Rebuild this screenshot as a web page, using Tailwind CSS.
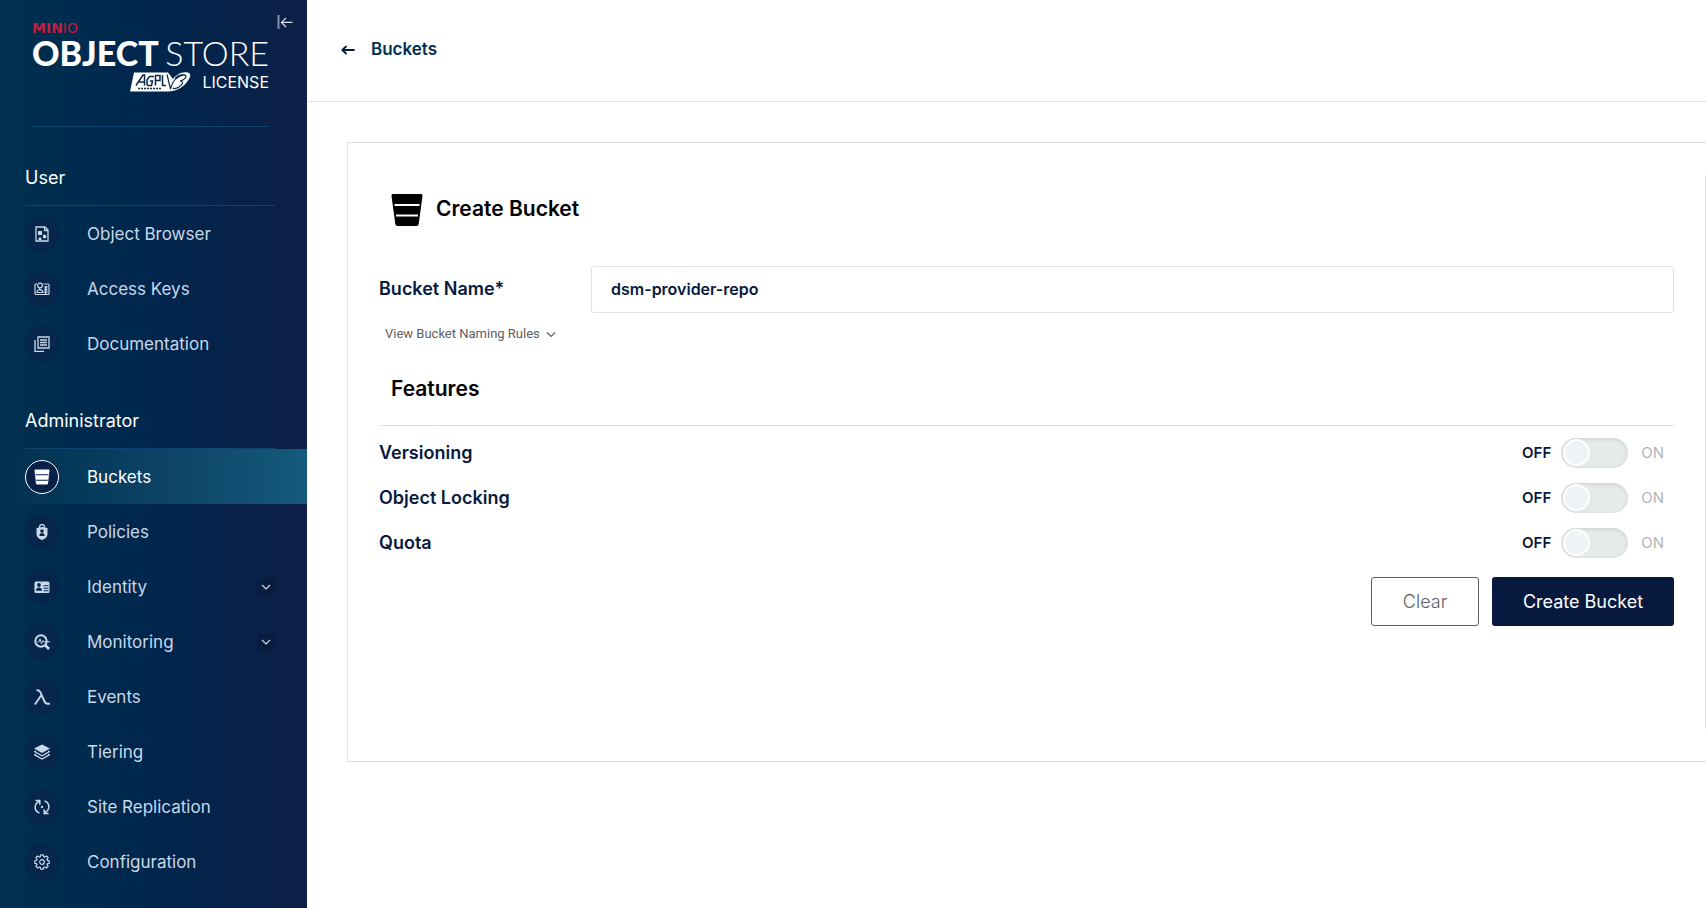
<!DOCTYPE html>
<html lang="en">
<head>
<meta charset="utf-8">
<meta name="viewport" content="width=device-width, initial-scale=1">
<title>MinIO Console - Create Bucket</title>
<script src="https://cdn.jsdelivr.net/npm/@tailwindcss/browser@4"></script>
</head>
<body class="flex min-h-screen overflow-x-hidden bg-white font-['Inter',sans-serif] text-[#07193e]">
<nav aria-label="Main" class="relative flex w-[307px] shrink-0 flex-col bg-linear-to-r from-[#00304f] via-[#00264d] to-[#0c1f46] text-[17px] leading-6 text-[#c9d8ea]">
  <button type="button" aria-label="Collapse menu" class="absolute top-[14px] right-[14px] flex size-4 items-center justify-center">
    <svg class="size-4" viewBox="0 0 16 16" fill="none" stroke="#dbe3ec" stroke-width="1.2"><path d="M1.5 1v14" stroke="#7f93ab" stroke-width="2"/><path d="M15.5 8.400H5M9 4 4.500 8.400 9 13"/></svg>
  </button>
  <div class="mr-[38px] ml-8 flex h-[127px] flex-col border-b border-[#0f4470] pt-[22px]">
    <div class="flex h-3 items-center font-['DejaVu_Sans',sans-serif] text-sm leading-3 text-[#c51c3f]"><span class="font-bold">MIN</span><span>IO</span></div>
    <div class="flex h-[38px] items-center justify-between font-['Lato',sans-serif] text-[34px] leading-[38px] text-white"><span class="font-black">OBJECT</span><span class="font-light">STORE</span></div>
    <div class="flex h-5 items-center justify-end gap-[11px] text-base leading-5 text-white">
      <svg class="h-5 w-[61px]" viewBox="0 0 61 20" aria-label="AGPL v3 Free Software">
        <path d="M4 0.500H38L43 7C46 3 51 0 56 .3 62 .5 61 5 57 10 52 16 46 19.500 38 19.500H0Z" fill="#fff"/>
        <g fill="none" stroke="#05284c">
          <path d="M6 13.500 13 3h1.500v10.500M9 10h5M24 4.500h-4.500L17 8v4.500l1 1h3.500L22.500 9H20M25.500 13.500V3.500H30v5h-4.500M32.500 3v10.500H36" stroke-width="1.500"/>
          <path d="M37 2.500 40.500 17M40.500 17C42 10 47 4 55 2.500M45 6.500c4-4 9-4.500 10.500-3s-1 4.500-5.500 5.500c4 0 3 3.500-1 6-2 1.500-5 2-6 1" stroke-width="1.200"/>
          <path d="M8 16.500h24" stroke-width="1.500" stroke-dasharray="2 1"/>
        </g>
      </svg>
      <span>LICENSE</span>
    </div>
  </div>

  <h2 class="mr-8 ml-[25px] flex h-[79px] items-center border-b border-[#0f4470] pt-6 text-lg text-white">User</h2>
  <ul>
    <li><a href="#browser" class="flex h-[55px] items-center gap-7 pr-8 pl-[25px]"><span class="flex size-[34px] items-center justify-center rounded-full border border-[#072149] bg-[#06264c]"><svg class="size-4" viewBox="0 0 16 16" fill="none" stroke="currentColor" stroke-width="1.300"><path d="M2 1h9l3 3v11H2ZM10.500 1v3.500H14"/><path d="M4 5h4v4H4ZM4 14l2-3.500L8 14ZM12.500 10.500a1.900 1.900 0 1 1-3.800 0 1.900 1.900 0 0 1 3.800 0" fill="currentColor" stroke="none"/></svg></span>Object Browser</a></li>
    <li><a href="#keys" class="flex h-[55px] items-center gap-7 pr-8 pl-[25px]"><span class="flex size-[34px] items-center justify-center rounded-full border border-[#072149] bg-[#06264c]"><svg class="size-4" viewBox="0 0 16 16" fill="none" stroke="currentColor" stroke-width="1.200"><path d="M3 3H1.500Q1 3 1 4v8.500q0 1 1 1h12q1 0 1-1V4q0-1-1-1H9.500"/><circle cx="6" cy="4.500" r="2.400"/><path d="M3 11.500c0-4 6-4 6 0ZM5 7.500l2 2"/><path d="M11.500 5v8M10.500 6h3M10.500 8.500h3M10.500 11h3" stroke-width="1.500"/></svg></span>Access Keys</a></li>
    <li><a href="#docs" class="flex h-[55px] items-center gap-7 pr-8 pl-[25px]"><span class="flex size-[34px] items-center justify-center rounded-full border border-[#072149] bg-[#06264c]"><svg class="size-4" viewBox="0 0 16 16" fill="none" stroke="currentColor" stroke-width="1.300"><path d="M4 1h11v11H4ZM1 4v11.300h9M6 4h7M6 6.500h7M6 9h7"/></svg></span>Documentation</a></li>
  </ul>

  <h2 class="mr-8 ml-[25px] flex h-[78px] items-center border-b border-[#0f4470] pt-[22px] text-lg text-white">Administrator</h2>
  <ul>
    <li><a href="#buckets" aria-current="page" class="flex h-[55px] items-center gap-7 bg-linear-to-r from-[#01304f] via-[#0c4265] to-[#155a7c] pr-8 pl-[25px] text-white"><span class="flex size-[34px] items-center justify-center rounded-full border border-white bg-[#072149]"><svg class="size-4" viewBox="0 0 16 16"><path d="M.5 1.500Q.5.500 1.500.5h13q1 0 1 1L14 14.500q-.2 1-1 1H3q-.8 0-1-1Z" fill="#fff"/><path d="M1.500 5.800h13M2.200 11.200h11.600" stroke="#072149" stroke-width="1.100"/></svg></span>Buckets</a></li>
    <li><a href="#policies" class="flex h-[55px] items-center gap-7 pr-8 pl-[25px]"><span class="flex size-[34px] items-center justify-center rounded-full border border-[#072149] bg-[#06264c]"><svg class="size-4" viewBox="0 0 16 16"><path d="M5.500 4V3a2.500 2.500 0 0 1 5 0v1" fill="none" stroke="currentColor" stroke-width="1.300"/><path d="M2.500 4 8 3l5.500 1v6q0 4-5.500 6-5.500-2-5.500-6Z" fill="currentColor"/><circle cx="8" cy="7" r="1.800" fill="#06264c"/><path d="M5.300 12c0-4 5.400-4 5.400 0Z" fill="#06264c"/></svg></span>Policies</a></li>
    <li><button type="button" aria-expanded="false" class="flex h-[55px] w-full items-center gap-7 pr-8 pl-[25px] text-left"><span class="flex size-[34px] items-center justify-center rounded-full border border-[#072149] bg-[#06264c]"><svg class="size-4" viewBox="0 0 16 16"><rect x=".5" y="2.500" width="15" height="11.500" rx="1.500" fill="currentColor"/><g fill="#06264c"><circle cx="5" cy="6" r="1.900"/><path d="M2 11.800c0-4.300 6-4.300 6 0Z"/><path d="M9.500 6.200h5v1h-5ZM9.500 8.700h5v1h-5ZM9.500 11.200h5v1h-5Z"/></g></svg></span><span class="flex-1">Identity</span><span class="flex size-[18px] items-center justify-center rounded-xs bg-[#081c3f]"><svg class="size-2.5" viewBox="0 0 10 10" fill="none" stroke="currentColor" stroke-width="1.200"><path d="m1 3 4 4 4-4"/></svg></span></button></li>
    <li><button type="button" aria-expanded="false" class="flex h-[55px] w-full items-center gap-7 pr-8 pl-[25px] text-left"><span class="flex size-[34px] items-center justify-center rounded-full border border-[#072149] bg-[#06264c]"><svg class="size-4" viewBox="0 0 16 16" fill="none" stroke="currentColor"><circle cx="7" cy="7" r="5.700" stroke-width="2"/><path d="m11 11 4 4" stroke-width="2.600"/><path d="M3.500 7.800H5l1-3 1.500 5L9 6.500l.8 1.300H16" stroke-width="1"/></svg></span><span class="flex-1">Monitoring</span><span class="flex size-[18px] items-center justify-center rounded-xs bg-[#081c3f]"><svg class="size-2.5" viewBox="0 0 10 10" fill="none" stroke="currentColor" stroke-width="1.200"><path d="m1 3 4 4 4-4"/></svg></span></button></li>
    <li><a href="#events" class="flex h-[55px] items-center gap-7 pr-8 pl-[25px]"><span class="flex size-[34px] items-center justify-center rounded-full border border-[#072149] bg-[#06264c]"><svg class="size-4" viewBox="0 0 16 16" fill="none" stroke="currentColor" stroke-width="1.900"><path d="M2.500 1.300h1.300Q5.600 1.300 6.500 3.500L10.500 12.500q1 2.300 3 2.200H16M7.500 6 .9 15.500"/></svg></span>Events</a></li>
    <li><a href="#tiering" class="flex h-[55px] items-center gap-7 pr-8 pl-[25px]"><span class="flex size-[34px] items-center justify-center rounded-full border border-[#072149] bg-[#06264c]"><svg class="size-4" viewBox="0 0 16 16" fill="none" stroke="currentColor" stroke-width="1.300"><path d="m8 .500 8 4-8 4.500-8-4.500Z" fill="currentColor" stroke="none"/><path d="M1.800 7 .8 7.800 8 11.700l7.200-3.900-1-.8M1.800 10l-1 .9L8 15l7.200-4.100-1-.9"/></svg></span>Tiering</a></li>
    <li><a href="#replication" class="flex h-[55px] items-center gap-7 pr-8 pl-[25px]"><span class="flex size-[34px] items-center justify-center rounded-full border border-[#072149] bg-[#06264c]"><svg class="size-4" viewBox="0 0 16 16" fill="none" stroke="currentColor" stroke-width="1.500"><path d="M5.500 14C0 12-.5 5.500 5 2.500M1.500 1.500h4.300v4.300M10.500 2C16 4 16.500 10.500 11 13.500M14.500 14.500h-4.300v-4.300"/><circle cx="8" cy="8" r="1.200" fill="currentColor" stroke="none"/></svg></span>Site Replication</a></li>
    <li><a href="#configuration" class="flex h-[55px] items-center gap-7 pr-8 pl-[25px]"><span class="flex size-[34px] items-center justify-center rounded-full border border-[#072149] bg-[#06264c]"><svg class="size-4" viewBox="0 0 16 16" fill="none" stroke="currentColor" stroke-width="1.200" stroke-linejoin="round"><path d="M6.700.8h2.600l.4 1.900 1 .4 1.700-1.100 1.700 1.700-1.100 1.700.4 1 1.800.4v2.500l-1.800.4-.4 1 1.100 1.700-1.700 1.700-1.700-1.100-1 .4-.4 1.800H6.700l-.4-1.800-1-.4-1.700 1.100-1.700-1.700L3 10.700l-.4-1-1.800-.4V6.800l1.800-.4.400-1-1.100-1.700L3.600 2l1.700 1.100 1-.4Z"/><circle cx="8" cy="8" r="2.300"/></svg></span>Configuration</a></li>
  </ul>
</nav>

<main class="min-w-0 flex-1">
  <header class="flex h-[102px] items-center border-b border-[#e2e2e2] pb-1 pl-[34px]">
    <a href="#buckets" class="flex items-center gap-4 text-[17px] leading-6 font-semibold text-[#002f55]">
      <svg class="mt-0.5 h-3 w-3.5" viewBox="0 0 14 12" fill="none" stroke="#07193e" stroke-width="1.800" stroke-linecap="round" stroke-linejoin="round"><path d="M13 6H1.500M5 2.500 1.300 6 5 9.500"/></svg>Buckets
    </a>
  </header>

  <section class="mt-10 ml-10 flex gap-[31px] rounded-l-xs border border-r-0 border-[#e2e2e2] py-8 pl-[31px]">
    <form class="min-w-0 flex-1">
      <h1 class="mt-[19px] flex h-8 items-center gap-[13px] pl-3 text-[21px] leading-7 font-semibold text-black">
        <svg class="size-8" viewBox="0 0 32 32"><path d="M.5 2Q.3 0 2 0h28q1.700 0 1.500 2L27.700 30q-.3 2-2 2H6.300q-1.700 0-2-2Z"/><path d="M3.500 11h25M5 21.500h22" stroke="#fff" stroke-width="2.200"/></svg><span class="pb-0.5">Create Bucket</span>
      </h1>
      <div class="mt-10 flex items-center">
        <label for="bucket-name" class="w-[212px] shrink-0 pb-0.5 text-lg leading-6 font-semibold">Bucket Name*</label>
        <input id="bucket-name" type="text" value="dsm-provider-repo" class="h-[47px] min-w-0 flex-1 rounded-[3px] border border-[#e2e2e2] px-[19px] pb-0.5 text-base font-semibold outline-none">
      </div>
      <button type="button" aria-expanded="false" class="mt-[11px] flex h-5 items-center gap-1.5 pl-1.5 font-['Roboto',sans-serif] text-[13px] leading-5 text-[#5e5e5e]">View Bucket Naming Rules
        <svg class="size-2.5" viewBox="0 0 10 10" fill="none" stroke="currentColor" stroke-width="1.200"><path d="m1 3.500 4 4 4-4"/></svg>
      </button>
      <h2 class="mt-[31px] border-b border-[#e2e2e2] pb-[22px] pl-3 text-[21px] leading-7 font-semibold text-black">Features</h2>
      <div class="mt-1 text-lg leading-6 font-semibold">
        <div class="flex h-[45px] items-center justify-between"><label for="versioning">Versioning</label>
          <div class="flex items-center pr-2.5 text-[15px]"><span class="mr-2.5">OFF</span><input id="versioning" type="checkbox" role="switch" class="flex h-[30px] w-[67px] appearance-none items-center rounded-full bg-[#e6eaeb] px-0.5 shadow-[inset_0_1px_4px_#00000020] before:size-[27px] before:rounded-full before:border-2 before:border-white before:bg-[#f0f3f5] before:content-[''] checked:justify-end checked:bg-green-500"><span class="ml-[13px] font-normal text-[#b4b4b4]">ON</span></div></div>
        <div class="flex h-[45px] items-center justify-between"><label for="locking">Object Locking</label>
          <div class="flex items-center pr-2.5 text-[15px]"><span class="mr-2.5">OFF</span><input id="locking" type="checkbox" role="switch" class="flex h-[30px] w-[67px] appearance-none items-center rounded-full bg-[#e6eaeb] px-0.5 shadow-[inset_0_1px_4px_#00000020] before:size-[27px] before:rounded-full before:border-2 before:border-white before:bg-[#f0f3f5] before:content-[''] checked:justify-end checked:bg-green-500"><span class="ml-[13px] font-normal text-[#b4b4b4]">ON</span></div></div>
        <div class="flex h-[45px] items-center justify-between"><label for="quota">Quota</label>
          <div class="flex items-center pr-2.5 text-[15px]"><span class="mr-2.5">OFF</span><input id="quota" type="checkbox" role="switch" class="flex h-[30px] w-[67px] appearance-none items-center rounded-full bg-[#e6eaeb] px-0.5 shadow-[inset_0_1px_4px_#00000020] before:size-[27px] before:rounded-full before:border-2 before:border-white before:bg-[#f0f3f5] before:content-[''] checked:justify-end checked:bg-green-500"><span class="ml-[13px] font-normal text-[#b4b4b4]">ON</span></div></div>
      </div>
      <div class="mt-3 flex justify-end gap-[13px] text-lg leading-6">
        <button type="reset" class="h-[49px] w-[108px] rounded-[3px] border border-[#5e5e5e] font-light text-[#5e5e5e]">Clear</button>
        <button type="submit" class="h-[49px] w-[182px] rounded-[3px] bg-[#07193e] text-white">Create Bucket</button>
      </div>
    </form>
    <aside aria-label="Help" class="min-h-[554px] w-px bg-[#e2e2e2]"></aside>
  </section>
</main>
</body>
</html>
